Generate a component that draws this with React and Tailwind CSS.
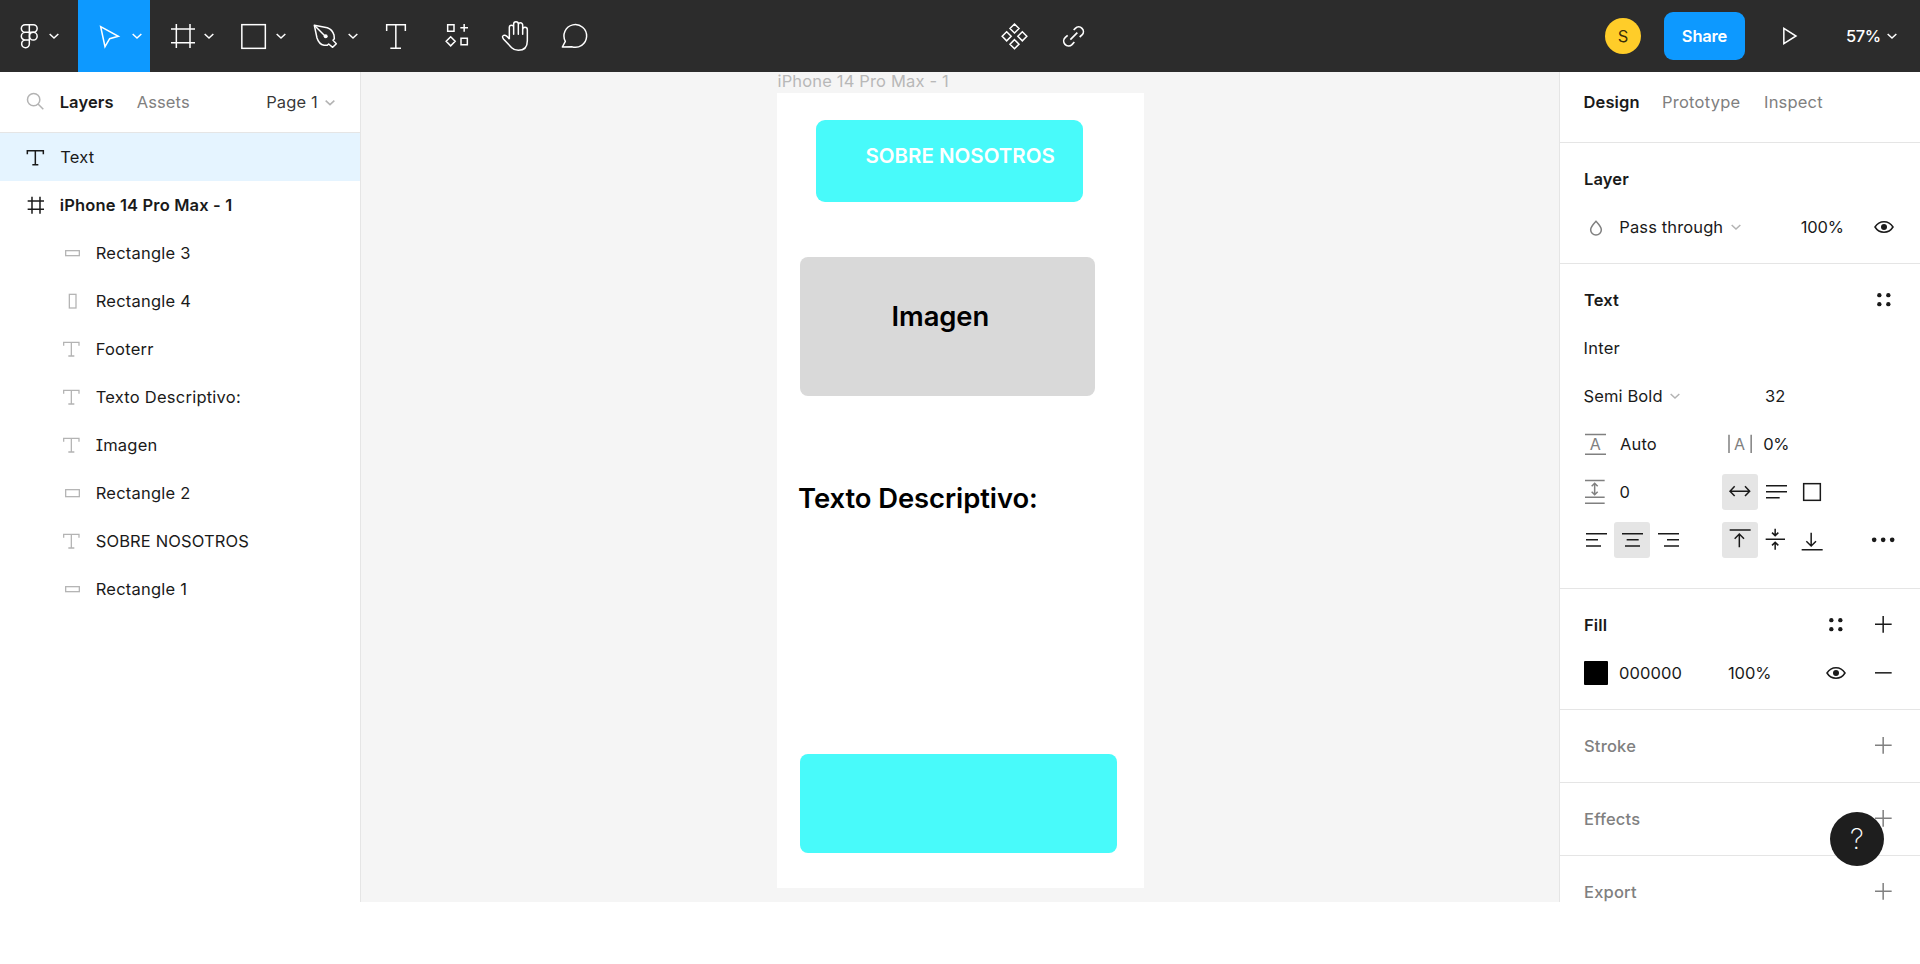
import React from "react";

// Icons are drawn on a 3x grid: every unit is a third of a pixel.
function Icon({ x = 0, y = 0, w, h, className = "", sw = 4.5, children }) {
  return (
    <svg
      className={`block shrink-0 ${className}`}
      width={w / 3}
      height={h / 3}
      viewBox={`${x} ${y} ${w} ${h}`}
      fill="none"
      stroke="currentColor"
      strokeWidth={sw}
    >
      {children}
    </svg>
  );
}

const chevron = (cx, cy) => <path d={`M${cx - 13} ${cy - 6}L${cx} ${cy + 6}L${cx + 13} ${cy - 6}`} />;

function Toolbar() {
  return (
    <header className="flex h-[72px] w-full shrink-0 bg-[#2c2c2c] text-white">
      <Icon x={0} w={234} h={216}>
        <path d="M88 74H75.500a11.500 11.500 0 0 0 0 23H88zM88 74h12a11.500 11.500 0 0 1 0 23H88zM88 97H75.500a11.500 11.500 0 0 0 0 23H88zM88 120H75.500A11.500 11.500 0 1 0 88 131z" />
        <circle cx="100" cy="108.500" r="11.500" />
        {chevron(162, 108)}
      </Icon>
      <div className="bg-[#0d99ff]">
        <Icon x={234} w={216} h={216}>
          <path d="M302 80L355 109L329 116L315 140Z" />
          {chevron(411, 108)}
        </Icon>
      </div>
      <Icon x={450} w={216} h={216}>
        <path d="M529 72V144M570 72V144M513 87H585M513 128H585" />
        {chevron(627, 108)}
      </Icon>
      <Icon x={666} w={216} h={216}>
        <rect x="725.500" y="74" width="70.500" height="71" />
        {chevron(843, 108)}
      </Icon>
      <Icon x={882} w={216} h={216}>
        <path d="M943 76L982 83Q997 88 1002 105L1003 116L999 121L1009 131L998 142L986 132L982 136H972Q957 133 951 114Z" strokeLinejoin="round" />
        <path d="M943 76L975 108" />
        <circle cx="977" cy="109" r="6" fill="currentColor" stroke="none" />
        {chevron(1059, 108)}
      </Icon>
      <Icon x={18} w={180} h={216}>
        <path d="M80 93V74.500H136V93M107.500 74V144M91 144.500H123" />
      </Icon>
      <Icon x={198} w={180} h={216}>
        <path d="M263 74.500h19v19h-19zM303 115h19v19h-19zM312.500 72V95M301 83.500H324M272 110.500L285.500 124L272 137.500L258.500 124Z" />
      </Icon>
      <Icon x={378} w={180} h={216}>
        <path d="M448 118V82a6.500 6.500 0 0 1 13 0V103V72a7 7 0 0 1 14 0V103V75a6.500 6.500 0 0 1 13 0V103V89a7 7 0 0 1 14 0V122Q502 151 475 151Q463 151 455 143L431 118Q424 109 431 106Q438 103 448 117" strokeLinejoin="round" />
      </Icon>
      <Icon x={558} w={180} h={216}>
        <path d="M607 141L616 124A34 34 0 1 1 635 140Z" strokeLinejoin="round" />
      </Icon>
      <div className="flex flex-1 pl-[379px]">
        <Icon x={75} w={180} h={216}>
          <path d="M163.500 72l13.500 13.500l-13.500 13.500l-13.500 -13.500zM163.500 119l13.500 13.500l-13.500 13.500l-13.500 -13.500zM140 95.500l13.500 13.500l-13.500 13.500l-13.500 -13.500zM187 95.500l13.500 13.500l-13.500 13.500l-13.500 -13.500z" />
        </Icon>
        <Icon x={255} w={180} h={216} sw={5}>
          <path d="M341 90L346 85A14 14 0 0 1 366 105L359 111M323 106L316 112A14 14 0 0 0 336 134L343 126M331 119L352 98" />
        </Icon>
      </div>
      <div className="flex items-center pr-[19px]">
        <div className="mr-[23px] flex size-9 items-center justify-center rounded-full bg-[#ffcd29] text-[16.5px] font-[380] text-black/80">S</div>
        <button className="h-12 w-[81px] rounded-[9px] bg-[#0d99ff] text-[16.5px] font-semibold tracking-[-0.2px]">Share</button>
        <Icon x={555} w={282} h={216}>
          <path d="M671.500 85V131L708 108Z" />
        </Icon>
        <span className="ml-[7px] w-[35px] text-[16.5px] font-medium tracking-[-0.5px]">57%</span>
        <Icon x={966} w={60} h={216}>{chevron(999, 108)}</Icon>
      </div>
    </header>
  );
}

function LayerRow({ kind, name, nameClass = "tracking-[0.24px]" }) {
  return (
    <li className="flex h-12 items-center pl-[63px]">
      <Icon x={0} y={0} w={98} h={48} className="text-[#b3b3b3]" sw={3.8}>
        {kind === "text" && <path d="M2 14V4H48V14M25 4V44M16 45H34" />}
        {kind === "wide" && <rect x="8" y="17" width="41" height="15" />}
        {kind === "wider" && <rect x="8" y="14" width="41" height="21" />}
        {kind === "tall" && <rect x="19" y="4" width="20" height="41" />}
      </Icon>
      <span className={nameClass}>{name}</span>
    </li>
  );
}

const layers = [
  ["wide", "Rectangle 3"],
  ["tall", "Rectangle 4"],
  ["text", "Footerr"],
  ["text", "Texto Descriptivo:"],
  ["text", "Imagen", "tracking-[0.24px] [font-feature-settings:'cv08']"],
  ["wider", "Rectangle 2"],
  ["text", "SOBRE NOSOTROS", "tracking-[0.14px]"],
  ["wide", "Rectangle 1"],
];

function LeftPanel() {
  return (
    <aside className="w-[361px] shrink-0 border-r border-[#e5e5e5] bg-white">
      <div className="flex h-[61px] items-center border-b border-[#e5e5e5]">
        <Icon x={0} y={216} w={179} h={180} className="text-[#b3b3b3]">
          <circle cx="101" cy="299" r="18.500" />
          <path d="M114 312L130 328" />
        </Icon>
        <span className="w-[77px] font-[580]">Layers</span>
        <span className="w-[129.500px] text-[#808080]">Assets</span>
        <span className="w-[54px] text-black/80">Page 1</span>
        <Icon x={960} y={216} w={60} h={180} className="text-[#b3b3b3]">{chevron(990, 308)}</Icon>
      </div>
      <ul>
        <li className="flex h-12 items-center bg-[#e5f4ff]">
          <Icon x={0} y={399} w={181} h={144}>
            <path d="M82 463V452H130V463M106 452V493M97 494H115" />
          </Icon>
          <span>Text</span>
        </li>
        <li className="flex h-12 items-center font-[580] tracking-[0.16px]">
          <Icon x={0} y={3} w={179} h={144}>
            <path d="M96 50V101M120 50V101M83 63H132M83 88H132" />
          </Icon>
          <span>iPhone 14 Pro Max - 1</span>
        </li>
        {layers.map(([kind, name, nameClass]) => (
          <LayerRow key={name} kind={kind} name={name} nameClass={nameClass} />
        ))}
      </ul>
    </aside>
  );
}

function Canvas() {
  return (
    <main className="relative flex-1 overflow-hidden bg-[#f5f5f5] leading-none text-black">
      <span className="absolute left-[416.500px] top-[0.500px] whitespace-nowrap text-[16.5px] leading-[17px] tracking-[0.16px] text-[#b8b8b8]">iPhone 14 Pro Max - 1</span>
      <div className="absolute left-[416px] top-[21px] h-[795px] w-[367px] bg-white">
        <div className="absolute left-[38.500px] top-[27px] h-[82px] w-[267.500px] rounded-[9px] bg-[#48fafa]" />
        <span className="absolute left-[88.500px] top-[53px] whitespace-nowrap text-[20.5px] font-semibold tracking-normal text-white">SOBRE NOSOTROS</span>
        <div className="absolute left-[23px] top-[164px] h-[139px] w-[295px] rounded-[8px] bg-[#d9d9d9]" />
        <span className="absolute left-[114.500px] top-[210px] text-[27.4px] font-semibold tracking-[-0.06px]">Imagen</span>
        <span className="absolute left-[21px] top-[392px] whitespace-nowrap text-[27.4px] font-semibold tracking-[-0.06px]">Texto Descriptivo:</span>
        <div className="absolute left-[23px] top-[661px] h-[98.500px] w-[316.500px] rounded-[8px] bg-[#48fafa]" />
      </div>
    </main>
  );
}

const dots = (cx, cy) => (
  <g fill="currentColor" stroke="none">
    <circle cx={cx - 13.5} cy={cy - 13.5} r="6.5" />
    <circle cx={cx + 13.5} cy={cy - 13.5} r="6.5" />
    <circle cx={cx - 13.5} cy={cy + 13.5} r="6.5" />
    <circle cx={cx + 13.5} cy={cy + 13.5} r="6.5" />
  </g>
);

const eye = (cx, cy) => (
  <g>
    <path d={`M${cx - 27} ${cy}C${cx - 14} ${cy - 21} ${cx + 14} ${cy - 21} ${cx + 27} ${cy}C${cx + 14} ${cy + 21} ${cx - 14} ${cy + 21} ${cx - 27} ${cy}Z`} />
    <circle cx={cx} cy={cy} r="9" fill="currentColor" stroke="none" />
  </g>
);

function Section({ children, className = "" }) {
  return <section className={`border-b border-[#e5e5e5] py-3 pl-6 ${className}`}>{children}</section>;
}

function EmptySection({ title }) {
  return (
    <Section className="text-[#808080]">
      <div className="flex h-12 items-center">
        <span className="flex-1 font-medium tracking-[0.2px]">{title}</span>
        <Icon x={900} y={426} w={180} h={144}>
          <path d="M945 495.500H995M969.500 471V521" />
        </Icon>
      </div>
    </Section>
  );
}

function RightPanel() {
  return (
    <aside className="w-[361px] shrink-0 overflow-hidden border-l border-[#e5e5e5] bg-white">
      <div className="flex h-[71px] border-b border-[#e5e5e5] pl-[23.500px] leading-[60px] text-[#808080]">
        <span className="w-[78.500px] font-[580] text-[#1a1a1a]">Design</span>
        <span className="w-[102px] tracking-[0.24px]">Prototype</span>
        <span className="tracking-[0.2px]">Inspect</span>
      </div>

      <Section>
        <div className="flex h-12 items-center font-[580]">Layer</div>
        <div className="flex h-12 items-center">
          <Icon x={72} y={609} w={106} h={144} className="text-[#808080]">
            <path d="M108 664Q92 681 92 689A16 16 0 0 0 124 689Q124 681 108 664Z" />
          </Icon>
          <span className="w-[106.670px]">Pass through</span>
          <Icon x={498} y={609} w={224} h={144} className="text-[#b3b3b3]">{chevron(528, 681)}</Icon>
          <span className="w-[59.330px] tracking-[-0.1px]">100%</span>
          <Icon x={900} y={609} w={180} h={144}>{eye(972, 681)}</Icon>
        </div>
      </Section>

      <Section className="pb-6">
        <div className="flex h-12 items-center font-[580]">
          <span className="flex-1">Text</span>
          <Icon x={900} y={48} w={180} h={144}>{dots(971.5, 119)}</Icon>
        </div>
        <div className="-ml-[0.500px] flex h-12 items-center tracking-[0.24px]">Inter</div>
        <div className="flex h-12 items-center">
          <span className="-ml-[0.500px] w-[81.500px]">Semi Bold</span>
          <Icon x={315} y={336} w={300} h={144} className="text-[#b3b3b3]">{chevron(345, 408)}</Icon>
          <span>32</span>
        </div>
        <div className="flex h-12 items-center">
          <Icon x={72} y={480} w={108} h={144} className="text-[#808080]">
            <path d="M75 523.5H138M75 582.5H138" />
            <text x="106" y="571" textAnchor="middle" fontSize="48" fill="currentColor" stroke="none">A</text>
          </Icon>
          <span className="w-[102px]">Auto</span>
          <Icon x={486} y={480} w={124} h={144} className="text-[#808080]">
            <path d="M507 524V579M573.5 524V579" />
            <text x="539" y="571" textAnchor="middle" fontSize="48" fill="currentColor" stroke="none">A</text>
          </Icon>
          <span className="tracking-[-0.6px]">0%</span>
        </div>
        <div className="flex h-12 items-center">
          <Icon x={72} y={624} w={105} h={144} className="text-[#808080]">
            <path d="M75 661.5H134M75 711.500H134M75 729.500H134M104 671V703M95 679L104 670L113 679M95 695L104 704L113 695" />
          </Icon>
          <span className="w-[103px] pl-[0.500px]">0</span>
          <div className="rounded-[3px] bg-[#e5e5e5]">
            <Icon x={486} y={642} w={108} h={108}>
              <path d="M511 693.500H568M524 679L510 693.500L524 708M555 679L569 693.500L555 708" />
            </Icon>
          </div>
          <Icon x={594} y={642} w={108} h={108}>
            <path d="M618 677H681M618 695.500H681M618 713.500H659" />
          </Icon>
          <Icon x={702} y={642} w={108} h={108}>
            <rect x="731" y="671" width="50" height="50" />
          </Icon>
        </div>
        <div className="-ml-1.5 flex h-12 items-center">
          <Icon x={54} y={786} w={108} h={108}>
            <path d="M78 821H141M78 839.500H114M78 858H123" />
          </Icon>
          <div className="rounded-[3px] bg-[#e5e5e5]">
            <Icon x={162} y={786} w={108} h={108}>
              <path d="M186 821H249M200 839.500H236M195 858H240" />
            </Icon>
          </div>
          <Icon x={270} y={786} w={216} h={108}>
            <path d="M294 821H357M321 839.500H357M312 858H357" />
          </Icon>
          <div className="rounded-[3px] bg-[#e5e5e5]">
            <Icon x={486} y={786} w={108} h={108}>
              <path d="M509 810H572M538 862V823M524 836L538 822L552 836" />
            </Icon>
          </div>
          <Icon x={594} y={786} w={108} h={108}>
            <path d="M617 837.500H675M645.500 806V826M636 818L645.500 827L655 818M645.500 869V848M636 856L645.500 847L655 856" />
          </Icon>
          <Icon x={702} y={786} w={198} h={108}>
            <path d="M725 869H788M753.500 818V857M739 844L753.500 858L768 844" />
          </Icon>
          <Icon x={900} y={786} w={180} h={108}>
            <g fill="currentColor" stroke="none">
              <circle cx="942.500" cy="839.500" r="7" />
              <circle cx="969.500" cy="839.500" r="7" />
              <circle cx="996.500" cy="839.500" r="7" />
            </g>
          </Icon>
        </div>
      </Section>

      <Section>
        <div className="flex h-12 items-center">
          <span className="flex-1 font-[580]">Fill</span>
          <Icon x={756} y={63} w={144} h={144}>{dots(827.5, 134)}</Icon>
          <Icon x={900} y={63} w={180} h={144}>
            <path d="M945 132.500H995M969.500 108V158" />
          </Icon>
        </div>
        <div className="flex h-12 items-center">
          <div className="mr-[11px] size-6 rounded-[1px] bg-black" />
          <span className="w-[109px] tracking-[0.08px]">000000</span>
          <span className="flex-1 tracking-[-0.1px]">100%</span>
          <Icon x={756} y={207} w={144} h={144}>{eye(828, 279)}</Icon>
          <Icon x={900} y={207} w={180} h={144}>
            <path d="M945 278.500H995" />
          </Icon>
        </div>
      </Section>

      <EmptySection title="Stroke" />
      <EmptySection title="Effects" />
      <EmptySection title="Export" />
    </aside>
  );
}

export default function App() {
  return (
    <div className="flex h-[964px] w-[1920px] flex-col overflow-hidden bg-white font-['Inter',sans-serif] text-[16.5px] font-[380] leading-6 tracking-[0.12px] text-[#1a1a1a]">
      <Toolbar />
      <div className="relative flex h-[830px] shrink-0 overflow-hidden">
        <LeftPanel />
        <Canvas />
        <RightPanel />
        <button className="absolute bottom-[36px] right-[36px] flex size-[54px] items-center justify-center rounded-full bg-[#1e1e1e] text-[28px] font-extralight text-white">
          ?
        </button>
      </div>
    </div>
  );
}
